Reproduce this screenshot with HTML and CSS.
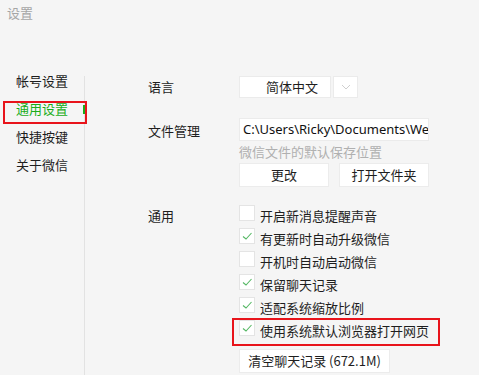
FILE: index.html
```html
<!DOCTYPE html>
<html lang="zh-CN">
<head>
<meta charset="utf-8">
<title>设置</title>
<link rel="stylesheet" href="styles.css">
</head>
<body>
<div class="window">
  <div class="title">设置</div>
  <div class="body">
    <nav class="sidebar">
      <div class="nav-item">帐号设置</div>
      <div class="nav-item active">通用设置</div>
      <div class="nav-item">快捷按键</div>
      <div class="nav-item">关于微信</div>
    </nav>
    <div class="divider"></div>
    <main class="content">
      <div class="row row-lang">
        <div class="label">语言</div>
        <div class="control select">
          <div class="select-value">简体中文</div>
          <div class="select-arrow">
            <svg width="10" height="6" viewBox="0 0 10 6"><polyline points="1,1 5,5 9,1" fill="none" stroke="#cfcfcf" stroke-width="1"/></svg>
          </div>
        </div>
      </div>
      <div class="row row-file">
        <div class="label">文件管理</div>
        <div class="control file-group">
          <div class="path-input">C:\Users\Ricky\Documents\WeChat Files</div>
          <div class="hint">微信文件的默认保存位置</div>
          <div class="btn-row">
            <div class="btn btn-change">更改</div>
            <div class="btn btn-open">打开文件夹</div>
          </div>
        </div>
      </div>
      <div class="row row-general">
        <div class="label">通用</div>
        <div class="control checks">
          <div class="check-row"><span class="box"></span><span class="check-text">开启新消息提醒声音</span></div>
          <div class="check-row"><span class="box checked"><svg width="16" height="16" viewBox="0 0 16 16"><polyline points="4,8.5 7,11 12.5,5" fill="none" stroke="#56b865" stroke-width="1.1"/></svg></span><span class="check-text">有更新时自动升级微信</span></div>
          <div class="check-row"><span class="box"></span><span class="check-text">开机时自动启动微信</span></div>
          <div class="check-row"><span class="box checked"><svg width="16" height="16" viewBox="0 0 16 16"><polyline points="4,8.5 7,11 12.5,5" fill="none" stroke="#56b865" stroke-width="1.1"/></svg></span><span class="check-text">保留聊天记录</span></div>
          <div class="check-row"><span class="box checked"><svg width="16" height="16" viewBox="0 0 16 16"><polyline points="4,8.5 7,11 12.5,5" fill="none" stroke="#56b865" stroke-width="1.1"/></svg></span><span class="check-text">适配系统缩放比例</span></div>
          <div class="check-row highlight"><span class="box checked"><svg width="16" height="16" viewBox="0 0 16 16"><polyline points="4,8.5 7,11 12.5,5" fill="none" stroke="#56b865" stroke-width="1.1"/></svg></span><span class="check-text">使用系统默认浏览器打开网页</span></div>
          <div class="btn btn-clear">清空聊天记录 (672.1M)</div>
        </div>
      </div>
    </main>
  </div>
</div>
</body>
</html>
```

FILE: styles.css
```css
* { box-sizing: border-box; }
html, body {
  margin: 0;
  padding: 0;
}
body {
  width: 479px;
  height: 375px;
  overflow: hidden;
  background: #f5f5f5;
  font-family: "Noto Sans CJK SC", "Noto Sans", sans-serif;
  font-size: 13px;
  color: #1e1e1e;
}
.window {
  width: 479px;
  height: 375px;
  display: flex;
  flex-direction: column;
}
.title {
  height: 73px;
  padding: 5px 0 0 7px;
  line-height: 16px;
  color: #a6a6a6;
  font-size: 13px;
}
.body {
  flex: 1;
  display: flex;
}
.sidebar {
  width: 84px;
  display: flex;
  flex-direction: column;
  gap: 12px;
}
.nav-item {
  position: relative;
  line-height: 16px;
  height: 16px;
  padding-left: 16px;
}
.nav-item.active {
  color: #1aad19;
}
.nav-item.active::before {
  content: "";
  position: absolute;
  left: 3px;
  top: 0;
  width: 80px;
  height: 19px;
  border: 2px solid #e8141b;
}
.nav-item.active::after {
  content: "";
  position: absolute;
  left: 83px;
  top: 4px;
  width: 2px;
  height: 9px;
  background: #1aad19;
}
.divider {
  width: 1px;
  margin-top: 3px;
  background: #e2e2e2;
}
.content {
  flex: 1;
  padding: 3px 0 0 63px;
  display: flex;
  flex-direction: column;
}
.row {
  display: flex;
}
.label {
  width: 91px;
  flex: none;
}
.row-lang .label {
  line-height: 22px;
}
.select {
  display: flex;
  gap: 2px;
  height: 22px;
}
.select-value {
  width: 92px;
  background: #fff;
  border: 1px solid #ebebeb;
  line-height: 20px;
  padding-left: 26px;
}
.select-arrow {
  width: 25px;
  background: #fff;
  border: 1px solid #ebebeb;
  display: flex;
  align-items: center;
  justify-content: center;
}
.row-file {
  margin-top: 20px;
}
.row-file .label {
  line-height: 23px;
  padding-top: 1px;
}
.file-group {
  display: flex;
  flex-direction: column;
}
.path-input {
  width: 190px;
  height: 23px;
  background: #fff;
  border: 1px solid #ebebeb;
  padding-left: 3px;
  line-height: 21px;
  white-space: nowrap;
  overflow: hidden;
  font-family: "Noto Sans", "Noto Sans CJK SC", sans-serif;
  font-size: 13px;
  color: #111;
}
.hint {
  margin-top: 3px;
  line-height: 16px;
  color: #b0b0b0;
}
.btn-row {
  margin-top: 3px;
  display: flex;
  gap: 10px;
}
.btn {
  height: 24px;
  background: #fff;
  border: 1px solid #ececec;
  line-height: 22px;
  text-align: center;
}
.btn-change { width: 90px; }
.btn-open { width: 90px; }
.row-general {
  margin-top: 18px;
}
.row-general .label {
  line-height: 16px;
  padding-top: 3px;
}
.checks {
  display: flex;
  flex-direction: column;
}
.check-row {
  position: relative;
  display: flex;
  align-items: flex-start;
  height: 23px;
}
.box {
  width: 16px;
  height: 16px;
  flex: none;
  background: #fff;
  border: 1px solid #e4e4e4;
  position: relative;
}
.box svg {
  position: absolute;
  left: -1px;
  top: -1px;
}
.check-text {
  margin-left: 5px;
  margin-top: 3px;
  line-height: 16px;
}
.check-row.highlight::after {
  content: "";
  position: absolute;
  left: -7px;
  top: -2px;
  width: 204px;
  height: 24px;
  border: 2px solid #e8141b;
}
.btn-clear {
  margin-top: 6px;
  width: 151px;
}
```
